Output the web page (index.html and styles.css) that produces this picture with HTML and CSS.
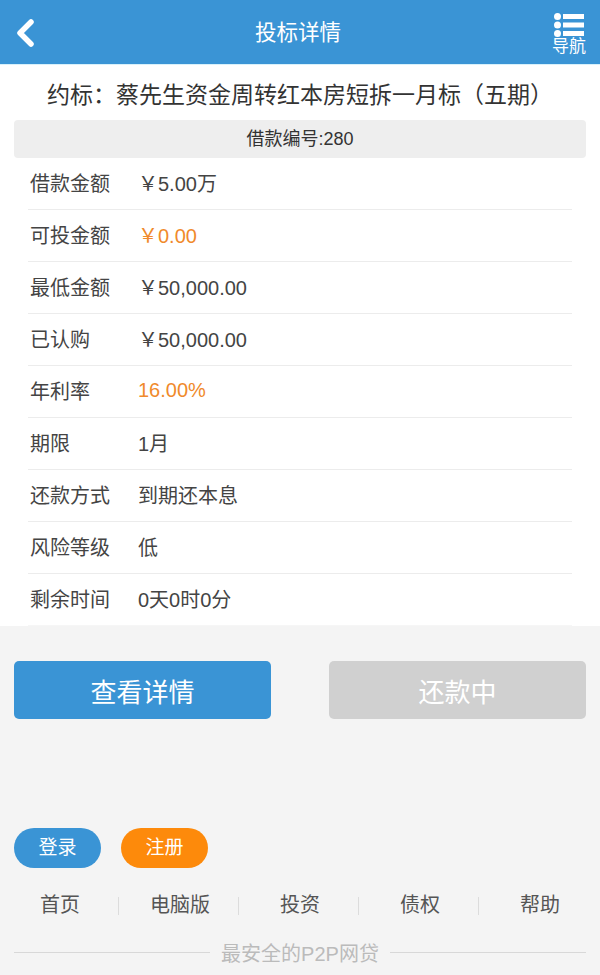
FILE: index.html
```html
<!DOCTYPE html>
<html lang="zh-CN">
<head>
    <meta charset="UTF-8">
    <meta name="viewport" content="width=device-width, initial-scale=1.0">
    <title>投标详情</title>
    <link rel="stylesheet" href="styles.css">
</head>
<body>
    <div class="header">
        <a class="back" href="#">
            <svg width="22" height="30" viewBox="0 0 22 30"><path d="M17 4 L6 15 L17 26" fill="none" stroke="#fff" stroke-width="5.5" stroke-linecap="round" stroke-linejoin="round"/></svg>
        </a>
        <h1>投标详情</h1>
        <a class="nav" href="#">
            <svg width="30" height="24" viewBox="0 0 30 24">
                <circle cx="3.5" cy="3.5" r="3.5" fill="#fff"/>
                <circle cx="3.5" cy="12" r="3.5" fill="#fff"/>
                <circle cx="3.5" cy="20.5" r="3.5" fill="#fff"/>
                <rect x="9" y="1" width="21" height="5" fill="#fff"/>
                <rect x="9" y="9.5" width="21" height="5" fill="#fff"/>
                <rect x="9" y="18" width="21" height="5" fill="#fff"/>
            </svg>
            <span>导航</span>
        </a>
    </div>

    <div class="detail">
        <h2>约标：蔡先生资金周转红本房短拆一月标（五期）</h2>
        <div class="loan-no">借款编号:280</div>
        <ul class="info">
            <li><span class="label">借款金额</span><span>￥5.00万</span></li>
            <li><span class="label">可投金额</span><span class="orange">￥0.00</span></li>
            <li><span class="label">最低金额</span><span>￥50,000.00</span></li>
            <li><span class="label">已认购</span><span>￥50,000.00</span></li>
            <li><span class="label">年利率</span><span class="orange">16.00%</span></li>
            <li><span class="label">期限</span><span>1月</span></li>
            <li><span class="label">还款方式</span><span>到期还本息</span></li>
            <li><span class="label">风险等级</span><span>低</span></li>
            <li><span class="label">剩余时间</span><span>0天0时0分</span></li>
        </ul>
    </div>

    <div class="actions">
        <button class="btn btn-blue">查看详情</button>
        <button class="btn btn-gray">还款中</button>
    </div>

    <div class="footer">
        <div class="account">
            <a class="pill pill-blue" href="#">登录</a>
            <a class="pill pill-orange" href="#">注册</a>
        </div>
        <div class="links">
            <a href="#">首页</a>
            <a href="#">电脑版</a>
            <a href="#">投资</a>
            <a href="#">债权</a>
            <a href="#">帮助</a>
        </div>
        <div class="slogan"><span>最安全的P2P网贷</span></div>
    </div>
</body>
</html>
```

FILE: styles.css
```css
body {
    font-family: "Liberation Sans", "Noto Sans CJK SC", sans-serif;
    margin: 0;
    background-color: #f4f4f4;
    color: #333;
}
a {
    text-decoration: none;
}
.header {
    height: 64px;
    background-color: #3a94d5;
    border-bottom: 1px solid #d8f1fb;
    display: flex;
    align-items: center;
    justify-content: space-between;
    padding: 0 14px 0 14px;
    color: #fff;
}
.header h1 {
    margin: 0;
    padding-top: 4px;
    font-size: 21.5px;
    font-weight: normal;
    line-height: 1;
}
.back {
    width: 30px;
    display: flex;
    padding-top: 2px;
}
.nav {
    width: 34px;
    display: flex;
    flex-direction: column;
    align-items: center;
    color: #fff;
    font-size: 17px;
    line-height: 1;
    margin-right: -14px;
    padding-right: 14px;
    padding-top: 4px;
}
.nav span {
    margin-top: 1px;
}
.detail {
    background-color: #fff;
    padding: 15px 14px 0;
}
.detail h2 {
    margin: 0;
    font-size: 23px;
    font-weight: normal;
    text-align: center;
    line-height: 30px;
    color: #333;
}
.loan-no {
    margin-top: 10px;
    height: 38px;
    line-height: 38px;
    background-color: #eee;
    border-radius: 4px;
    text-align: center;
    font-size: 18px;
    color: #333;
}
.info {
    list-style: none;
    margin: 0;
    padding: 0 14px;
}
.info li {
    display: flex;
    align-items: center;
    height: 48px;
    padding-bottom: 3px;
    border-bottom: 1px solid #ececec;
    font-size: 20px;
    color: #444;
}
.info li:last-child {
    border-bottom-color: #f6f6f6;
}
.label {
    width: 108px;
    padding-left: 2px;
}
.orange {
    color: #f08a2b;
}
.actions {
    display: flex;
    justify-content: space-between;
    padding: 35px 14px 0;
}
.btn {
    width: 257px;
    height: 58px;
    border: none;
    border-radius: 5px;
    font-family: inherit;
    font-size: 26px;
    color: #fff;
}
.btn-blue {
    background-color: #3a94d5;
}
.btn-gray {
    background-color: #d0d0d0;
}
.footer {
    padding: 109px 14px 0;
}
.account {
    display: flex;
    gap: 20px;
}
.pill {
    width: 87px;
    height: 40px;
    line-height: 40px;
    border-radius: 20px;
    text-align: center;
    color: #fff;
    font-size: 19px;
}
.pill-blue {
    background-color: #3a94d5;
}
.pill-orange {
    background-color: #fd8a0b;
}
.links {
    display: flex;
    margin: 18px -14px 0;
}
.links a {
    flex: 1;
    text-align: center;
    font-size: 20px;
    line-height: 39px;
    color: #555;
    position: relative;
}
.links a + a::before {
    content: "";
    position: absolute;
    left: -2px;
    top: 11px;
    height: 18px;
    border-left: 1px solid #dcdcdc;
}
.slogan {
    display: flex;
    align-items: center;
    margin-top: 13px;
    font-size: 20px;
    color: #bbb;
}
.slogan::before,
.slogan::after {
    content: "";
    flex: 1;
    border-top: 1px solid #d8d8d8;
}
.slogan span {
    padding: 0 11px;
}
```
